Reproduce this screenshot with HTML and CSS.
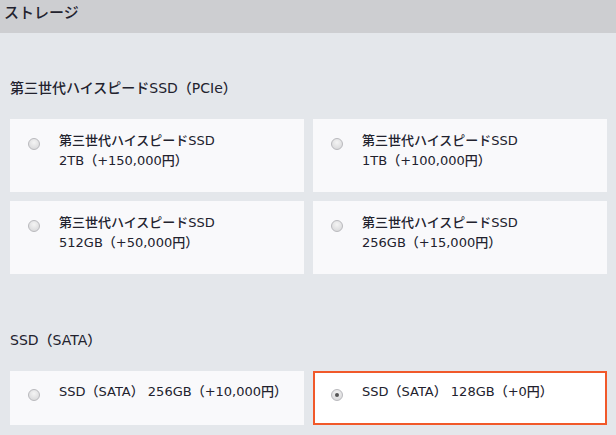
FILE: index.html
```html
<!DOCTYPE html>
<html lang="ja">
<head>
    <meta charset="UTF-8">
    <title>ストレージ</title>
    <link rel="stylesheet" href="styles.css">
</head>
<body>
    <header class="header">
        <h1>ストレージ</h1>
    </header>

    <main class="content">
        <section class="option-group">
            <h2>第三世代ハイスピードSSD（PCIe）</h2>
            <div class="option-grid">
                <label class="option-card">
                    <span class="radio"></span>
                    <span class="option-text">第三世代ハイスピードSSD<br>2TB（+150,000円）</span>
                </label>
                <label class="option-card">
                    <span class="radio"></span>
                    <span class="option-text">第三世代ハイスピードSSD<br>1TB（+100,000円）</span>
                </label>
                <label class="option-card">
                    <span class="radio"></span>
                    <span class="option-text">第三世代ハイスピードSSD<br>512GB（+50,000円）</span>
                </label>
                <label class="option-card">
                    <span class="radio"></span>
                    <span class="option-text">第三世代ハイスピードSSD<br>256GB（+15,000円）</span>
                </label>
            </div>
        </section>

        <section class="option-group">
            <h2>SSD（SATA）</h2>
            <div class="option-grid single">
                <label class="option-card">
                    <span class="radio"></span>
                    <span class="option-text">SSD（SATA） 256GB（+10,000円）</span>
                </label>
                <label class="option-card selected">
                    <span class="radio checked"></span>
                    <span class="option-text">SSD（SATA） 128GB（+0円）</span>
                </label>
            </div>
        </section>
    </main>
</body>
</html>
```

FILE: styles.css
```css
:root {
    --header-grey: #cdced1;
    --background: #e4e7eb;
    --card: #f9f9fb;
    --text-dark: #22222e;
    --accent-orange: #f1592a;
}

* {
    margin: 0;
    padding: 0;
    box-sizing: border-box;
    font-family: "DejaVu Sans", "Noto Sans CJK JP", sans-serif;
}

body {
    background-color: var(--background);
    color: var(--text-dark);
}

.header {
    background-color: var(--header-grey);
    height: 33px;
    padding: 3px 4px 0;
}

.header h1 {
    font-size: 15px;
    font-weight: 500;
    line-height: 20px;
}

.content {
    padding: 45px 9px 0 10px;
}

.option-group h2 {
    font-size: 14px;
    font-weight: 500;
    line-height: 20px;
    margin-bottom: 21px;
}

.option-group + .option-group {
    margin-top: 56px;
}

.option-grid {
    display: grid;
    grid-template-columns: 1fr 1fr;
    gap: 9px;
}

.option-card {
    display: flex;
    align-items: flex-start;
    background-color: var(--card);
    min-height: 73px;
    padding: 12px 14px 0 18px;
    font-size: 13px;
    font-weight: 500;
    line-height: 20px;
    cursor: pointer;
}

.single .option-card {
    min-height: 54px;
    padding-top: 11px;
}

.option-card.selected {
    background-color: white;
    border: 2px solid var(--accent-orange);
    padding: 9px 12px 0 16px;
}

.radio {
    flex-shrink: 0;
    width: 12px;
    height: 12px;
    margin-top: 7px;
    margin-right: 19px;
    border: 1px solid #b9b9bd;
    border-radius: 50%;
    background: radial-gradient(circle at 50% 35%, #f4f4f4, #d4d4d6);
    position: relative;
}

.radio.checked::after {
    content: "";
    position: absolute;
    top: 3px;
    left: 3px;
    width: 4px;
    height: 4px;
    border-radius: 50%;
    background-color: #555;
}
```
